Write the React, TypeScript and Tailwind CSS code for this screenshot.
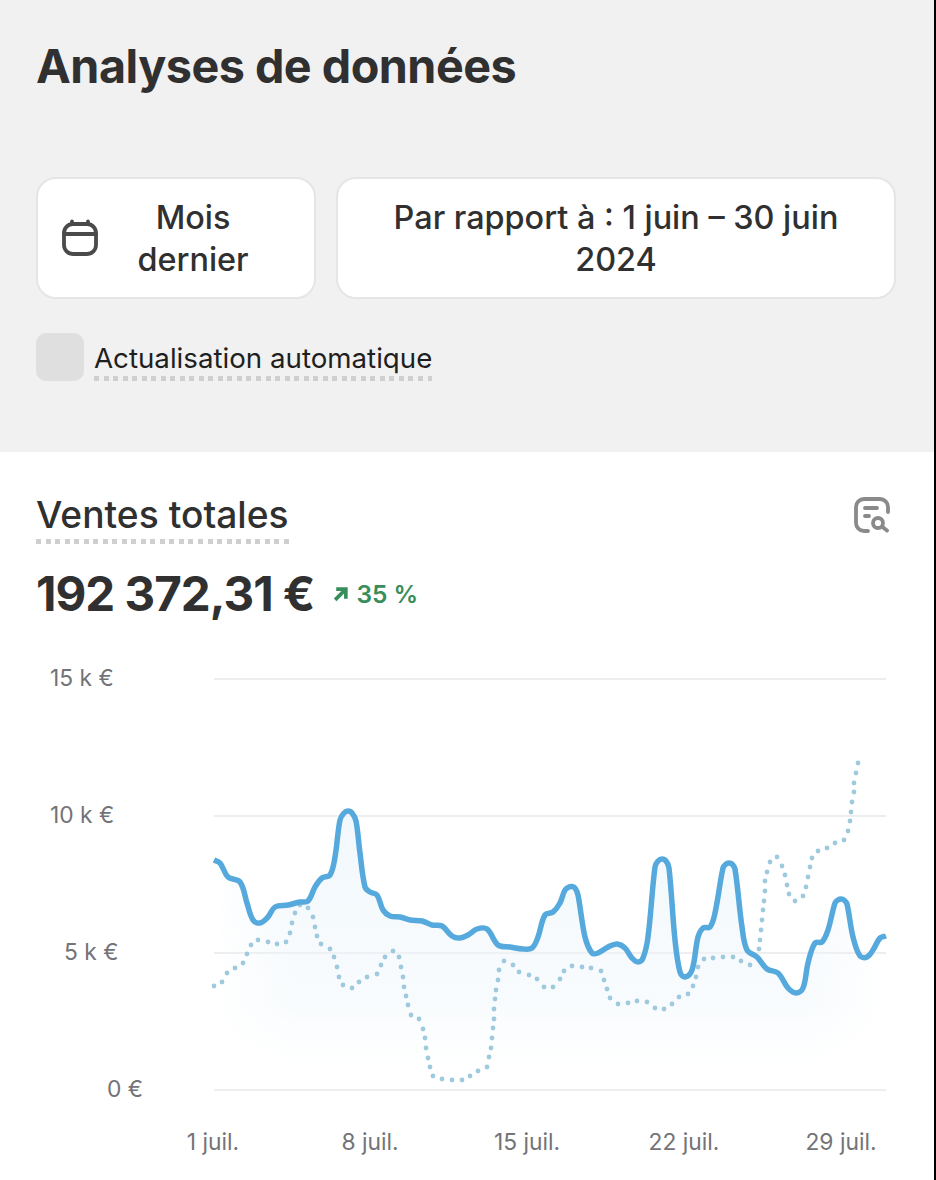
const SOLID: [number, number][] = [
  [214, 860], [220, 863], [228, 877], [240, 882], [247, 903], [253, 920], [260, 923], [268, 917], [275, 907],
  [288, 905], [300, 902], [308, 901], [315, 887], [322, 878], [330, 875], [335, 857], [340, 820], [344, 813], [348, 811],
  [352, 813], [356, 821], [360, 853], [365, 887], [370, 892], [377, 895], [383, 910], [390, 916], [400, 917], [410, 920],
  [422, 921], [432, 925], [442, 926], [452, 936], [460, 938], [468, 935], [477, 929], [487, 929], [498, 945],
  [510, 947], [523, 949], [532, 948], [538, 937], [545, 915], [553, 912], [560, 903], [565, 890], [569, 887], [572, 886.5],
  [575, 888], [578, 895], [585, 937], [592, 953], [598, 953], [608, 947], [617, 944], [625, 948], [632, 958], [638, 962],
  [643, 958], [648, 937], [655, 867], [658, 861], [662, 859], [666, 861], [669, 868], [675, 940], [680, 972], [685, 977], [692, 970],
  [698, 937], [703, 928], [710, 927], [715, 913], [723, 868], [726, 864], [729, 863], [732, 864], [735, 869], [742, 927], [747, 950],
  [757, 957], [767, 969], [778, 973], [788, 988], [796, 993], [803, 988], [808, 963], [815, 943], [822, 942],
  [828, 930], [835, 903], [838, 900], [841, 899], [844, 900], [847, 904], [853, 937], [860, 956], [867, 957], [873, 950], [880, 938],
  [886, 936],
];

const DOTS: [number, number][] = [
  [214, 986], [222, 982], [227, 973], [235, 968], [243, 963], [247, 954], [251, 945], [258, 940], [268, 942],
  [277, 944], [286, 942], [290, 933], [292, 923], [295, 913], [300, 905], [308, 908], [313, 917], [315, 927],
  [317, 936], [321, 944], [330, 949], [334, 957], [337, 967], [339, 977], [343, 985], [352, 988], [359, 982],
  [367, 977], [377, 974], [381, 965], [385, 957], [393, 951], [399, 957], [401, 967], [403, 977], [404, 987],
  [406, 996], [408, 1005], [411, 1015], [419, 1019], [423, 1029], [425, 1038], [426, 1048], [428, 1058],
  [430, 1067], [433, 1076], [442, 1079], [452, 1080], [462, 1080], [470, 1076], [478, 1071], [487, 1067],
  [489, 1057], [491, 1048], [492, 1038], [493, 1028], [494, 1019], [494, 1009], [495, 999], [496, 990],
  [498, 980], [499, 970], [504, 961], [513, 965], [519, 972], [529, 975], [537, 979], [544, 987], [553, 987],
  [560, 979], [564, 971], [572, 966], [582, 967], [591, 968], [601, 971], [604, 980], [607, 989], [610, 998],
  [618, 1004], [628, 1003], [637, 1001], [647, 1002], [655, 1008], [664, 1009], [672, 1004], [679, 997],
  [688, 994], [693, 986], [696, 977], [698, 967], [704, 959], [713, 958], [723, 957], [733, 957], [741, 961],
  [750, 965], [759, 949], [760, 940], [761, 930], [762, 920], [763, 910], [764, 901], [765, 891], [765, 881],
  [767, 872], [770, 862], [777, 857], [782, 866], [785, 875], [787, 885], [789, 894], [795, 901], [803, 896],
  [806, 887], [808, 877], [810, 867], [812, 858], [818, 851], [827, 848], [835, 843], [844, 840], [848, 831],
  [850, 821], [851, 812], [852, 802], [854, 792], [854, 783], [856, 773], [858, 763],
];

// chart svg starts at y=650 on the page
const TOP = 650;

// unit tangent at a point, from its two neighbours
function tangent(points: [number, number][], i: number) {
  const a = points[Math.max(i - 1, 0)];
  const b = points[Math.min(i + 1, points.length - 1)];
  const len = Math.hypot(b[0] - a[0], b[1] - a[1]) || 1;
  return [(b[0] - a[0]) / len, (b[1] - a[1]) / len];
}

// handles scale with the segment length, otherwise short segments overshoot at the peaks
function smoothPath(points: [number, number][]) {
  let d = `M${points[0][0]} ${points[0][1] - TOP}`;
  for (let i = 0; i < points.length - 1; i++) {
    const p1 = points[i];
    const p2 = points[i + 1];
    const t1 = tangent(points, i);
    const t2 = tangent(points, i + 1);
    const h = Math.hypot(p2[0] - p1[0], p2[1] - p1[1]) / 3;
    const c1x = p1[0] + t1[0] * h;
    const c1y = p1[1] + t1[1] * h - TOP;
    const c2x = p2[0] - t2[0] * h;
    const c2y = p2[1] - t2[1] * h - TOP;
    d += `C${c1x.toFixed(1)} ${c1y.toFixed(1)} ${c2x.toFixed(1)} ${c2y.toFixed(1)} ${p2[0]} ${p2[1] - TOP}`;
  }
  return d;
}

const GRID = [
  { label: '15 k €', x: 50, y: 679 },
  { label: '10 k €', x: 50, y: 816 },
  { label: '5 k €', x: 64, y: 953 },
  { label: '0 €', x: 107, y: 1090 },
];

const X_LABELS = [
  { label: '1 juil.', x: 213 },
  { label: '8 juil.', x: 370 },
  { label: '15 juil.', x: 527 },
  { label: '22 juil.', x: 684 },
  { label: '29 juil.', x: 841 },
];

function Chart() {
  const line = smoothPath(SOLID);
  return (
    <svg width="934" height="530" viewBox="0 0 934 530" className="block">
      <defs>
        <linearGradient id="area" x1="0" y1="0" x2="0" y2="1">
          <stop offset="0" stopColor="#eaf4fb" stopOpacity="0.65" />
          <stop offset="0.7" stopColor="#eff6fb" stopOpacity="0.4" />
          <stop offset="1" stopColor="#ffffff" stopOpacity="0" />
        </linearGradient>
        <linearGradient id="edges" x1="0" y1="0" x2="1" y2="0">
          <stop offset="0" stopColor="#000000" />
          <stop offset="0.12" stopColor="#ffffff" />
          <stop offset="0.88" stopColor="#ffffff" />
          <stop offset="1" stopColor="#000000" />
        </linearGradient>
        <mask id="fade" maskUnits="userSpaceOnUse" x="214" y="0" width="672" height="530">
          <rect x="214" y="0" width="672" height="530" fill="url(#edges)" />
        </mask>
      </defs>
      {GRID.map((g) => (
        <g key={g.label}>
          <line x1="214" x2="886" y1={g.y - TOP} y2={g.y - TOP} stroke="#eeeef0" strokeWidth="2" />
          <text x={g.x} y={g.y - TOP + 7} fontSize="22.8" fill="#737378">
            {g.label}
          </text>
        </g>
      ))}
      <path d={`${line}L886 440L214 440Z`} fill="url(#area)" mask="url(#fade)" />
      {DOTS.map(([x, y]) => (
        <circle key={`${x}-${y}`} cx={x} cy={y - TOP} r="2.4" fill="#9fc9dd" />
      ))}
      <path d={line} fill="none" stroke="#55a9dc" strokeWidth="5.5" strokeLinejoin="round" />
      {X_LABELS.map((l) => (
        <text key={l.label} x={l.x} y="500" fontSize="22.8" fill="#737378" textAnchor="middle">
          {l.label}
        </text>
      ))}
    </svg>
  );
}

function CalendarIcon() {
  return (
    <svg width="36" height="38" viewBox="0 0 36 38" fill="none" stroke="#4a4a4a" strokeWidth="3.8" strokeLinecap="round">
      <rect x="2" y="5" width="32" height="30" rx="9" />
      <path d="M2 15H34" />
      <path d="M10 2.5V5M26 2.5V5" />
    </svg>
  );
}

function ReportSearchIcon() {
  return (
    <svg width="36" height="36" viewBox="0 0 36 36" fill="none" stroke="#8a8a8a" strokeWidth="3.8" strokeLinecap="round" strokeLinejoin="round">
      <path d="M14 34H10a8 8 0 0 1-8-8V10a8 8 0 0 1 8-8h16a8 8 0 0 1 8 8v5" />
      <path d="M11 11H23M11 19H15" />
      <circle cx="24" cy="26" r="5" />
      <path d="M28.5 30L33 33.5" />
    </svg>
  );
}

function DottedRule() {
  return (
    <div className="h-[5px] bg-[repeating-linear-gradient(90deg,#cfcfcf_0,#cfcfcf_5px,transparent_5px,transparent_9.53px)]" />
  );
}

export default function App() {
  return (
    <div className="w-[936px] h-[1180px] overflow-hidden bg-white border-r-2 border-black font-['Inter',sans-serif]">
      <div className="h-[452px] bg-[#f1f1f1] px-9 pt-[36px]">
        <h1 className="text-[46.7px] leading-[60px] font-bold tracking-[-0.5px] text-[#303030]">Analyses de données</h1>
        <div className="mt-[81px] flex gap-[20px] w-[860px]">
          <div className="w-[280px] h-[122px] flex items-center pl-[24px] pr-[34px] gap-[8px] rounded-[20px] bg-white border-2 border-[#e5e5e5]">
            <CalendarIcon />
            <span className="flex-1 pt-[2px] text-center text-[32.4px] leading-[42px] font-medium text-[#303030]">Mois dernier</span>
          </div>
          <div className="flex-1 h-[122px] flex items-center justify-center px-[24px] rounded-[20px] bg-white border-2 border-[#e5e5e5]">
            <span className="pt-[2px] text-center text-[32.4px] leading-[42px] font-medium text-[#303030]">Par rapport à : 1 juin – 30 juin 2024</span>
          </div>
        </div>
        <div className="mt-[34px] flex items-start gap-[10px]">
          <div className="w-[48px] h-[48px] rounded-[10px] bg-[#dfdfdf]" />
          <div className="mt-[7px]">
            <div className="text-[27.7px] leading-[36px] text-[#1f1f1f]">Actualisation automatique</div>
            <DottedRule />
          </div>
        </div>
      </div>
      <div className="px-9 pt-[39px]">
        <div className="flex items-start justify-between pr-[8px]">
          <div>
            <div className="text-[37.2px] leading-[48px] font-medium text-[#303030]">Ventes totales</div>
            <DottedRule />
          </div>
          <div className="mt-[6px]">
            <ReportSearchIcon />
          </div>
        </div>
        <div className="mt-[20px] flex items-center gap-[19px]">
          <span className="text-[47.5px] leading-[60px] font-bold tracking-[-1px] text-[#303030]">192 372,31 €</span>
          <span className="flex items-center gap-[8px] text-[24.5px] font-semibold text-[#388e5a]">
            <svg width="15" height="15" viewBox="0 0 14 14" fill="none" stroke="#388e5a" strokeWidth="3.4">
              <path d="M3 2H12V11M12 2L2 12" />
            </svg>
            35 %
          </span>
        </div>
      </div>
      <div className="mt-[26px]">
        <Chart />
      </div>
    </div>
  );
}
